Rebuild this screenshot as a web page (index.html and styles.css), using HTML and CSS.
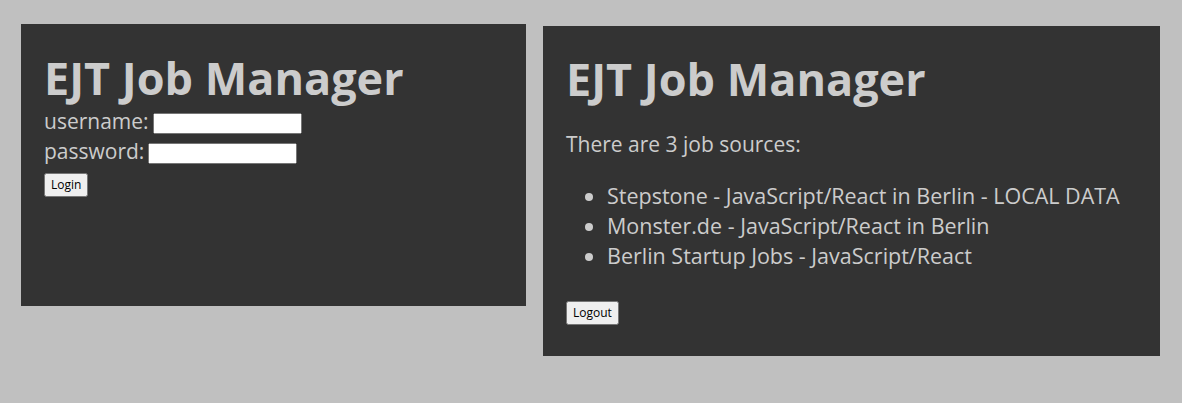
FILE: index.html
```html
<!DOCTYPE html>
<html lang="en">
<head>
<meta charset="utf-8">
<title>EJT Job Manager</title>
<link rel="stylesheet" href="styles.css">
</head>
<body>
<div class="screens">
  <section class="panel panel-login">
    <h1 class="title">EJT Job Manager</h1>
    <form class="login-form">
      <div class="field"><label class="field-label">username:</label><input class="field-input" type="text"></div>
      <div class="field"><label class="field-label">password:</label><input class="field-input" type="password"></div>
      <button class="btn" type="button">Login</button>
    </form>
  </section>
  <section class="panel panel-jobs">
    <h1 class="title">EJT Job Manager</h1>
    <p class="intro">There are 3 job sources:</p>
    <ul class="sources">
      <li>Stepstone - JavaScript/React in Berlin - LOCAL DATA</li>
      <li>Monster.de - JavaScript/React in Berlin</li>
      <li>Berlin Startup Jobs - JavaScript/React</li>
    </ul>
    <div class="actions"><button class="btn" type="button">Logout</button></div>
  </section>
</div>
</body>
</html>
```
FILE: styles.css
```css
html, body {
  margin: 0;
  background: #c0c0c0;
}
body {
  font-family: "Open Sans", "Noto Sans", sans-serif;
  color: #cccccc;
}
.screens {
  display: flex;
  align-items: flex-start;
  gap: 17px;
  padding: 24px 22px 0 21px;
}
.panel {
  background: #333333;
  box-sizing: border-box;
  padding: 0 23px;
}
.panel-login {
  width: 505px;
  height: 282px;
  padding-top: 29px;
}
.panel-jobs {
  width: 617px;
  margin-top: 2px;
  padding-top: 28px;
  padding-bottom: 31px;
}
.title {
  margin: 0;
  font-size: 45px;
  line-height: 50px;
  font-weight: 700;
}
.login-form {
  margin: 3px 0 0;
  display: flex;
  flex-direction: column;
  align-items: flex-start;
}
.field {
  display: flex;
  align-items: flex-end;
  gap: 4px;
  font-size: 21px;
  line-height: 30px;
}
.field-input {
  width: 149px;
  height: 21px;
  box-sizing: border-box;
  margin: 0 0 2px;
}
.btn {
  margin-top: 7px;
  font-family: "Open Sans", "Noto Sans", sans-serif;
  font-size: 12px;
  line-height: 18px;
  padding: 1px 5px;
  color: #000;
}
.intro {
  margin: 25px 0 0;
  font-size: 21px;
  line-height: 30px;
}
.sources {
  margin: 22px 0 0;
  padding-left: 41px;
  font-size: 21.5px;
  line-height: 30px;
}
.actions {
  margin-top: 29px;
}
.actions .btn {
  margin-top: 0;
}
```
